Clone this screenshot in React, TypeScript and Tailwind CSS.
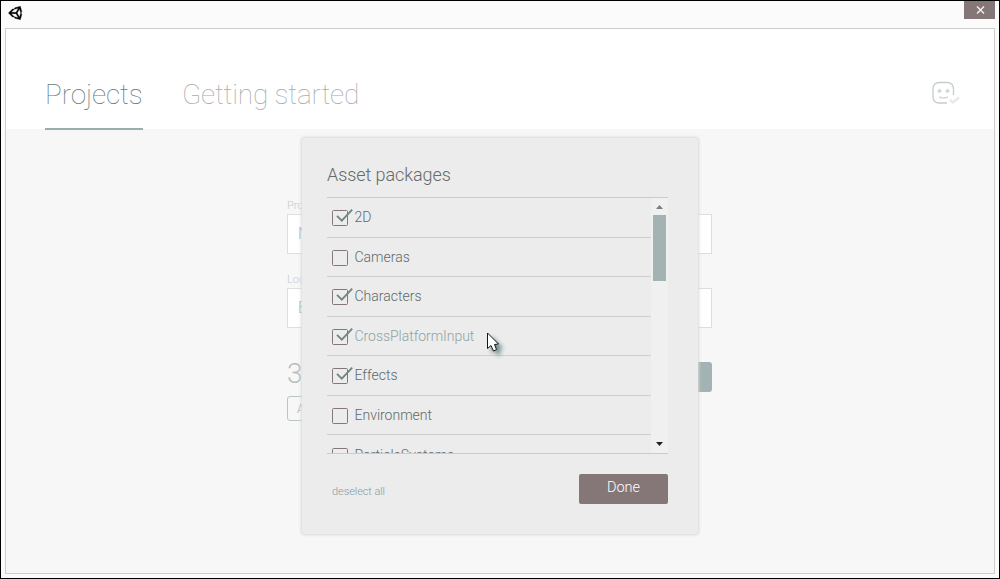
import React from "react";
import { FaUnity } from "react-icons/fa";

type Package = { name: string; checked: boolean; hovered?: boolean };

const packages: Package[] = [
  { name: "2D", checked: true },
  { name: "Cameras", checked: false },
  { name: "Characters", checked: true },
  { name: "CrossPlatformInput", checked: true, hovered: true },
  { name: "Effects", checked: true },
  { name: "Environment", checked: false },
  { name: "ParticleSystems", checked: false },
];

function Checkbox({ checked }: { checked: boolean }) {
  return (
    <svg width="22" height="20" viewBox="0 0 22 20" fill="none" className="shrink-0">
      <rect x="0.5" y="3.5" width="15" height="15" rx="1" stroke="#857777" />
      {checked && <path d="M5 8.8 L9.8 13.6 L20.2 2.6" stroke="#748484" strokeWidth="1.9" />}
    </svg>
  );
}

function PackageRow({ item }: { item: Package }) {
  return (
    <li className="flex h-[39.55px] shrink-0 items-center border-b border-[#cecece] pl-[5px]">
      <Checkbox checked={item.checked} />
      <span
        className={
          item.hovered
            ? "ml-[0.5px] text-[14px] leading-5 tracking-[-0.04px] text-[#8fa3a3]"
            : "ml-[0.5px] text-[14px] leading-5 text-[#606a6a]"
        }
      >
        {item.name}
      </span>
    </li>
  );
}

function Scrollbar() {
  return (
    <div className="flex w-[17px] shrink-0 flex-col items-center bg-[#f0f0f0]">
      <div className="flex h-[17px] items-center justify-center">
        <svg width="7" height="4" viewBox="0 0 7 4" className="mt-[1px]">
          <path d="M0 4 L3.5 0 L7 4Z" fill="#718080" />
        </svg>
      </div>
      <div className="h-[66px] w-[13px] bg-[#a3b2b2]" />
      <div className="flex-1" />
      <svg width="7" height="4" viewBox="0 0 7 4" className="mb-[7px]">
        <path d="M0 0 L3.5 4 L7 0Z" fill="#202020" />
      </svg>
    </div>
  );
}

function AssetDialog() {
  return (
    <section className="absolute top-[109px] left-[296px] flex h-[396px] w-[396px] flex-col rounded-[2px] bg-[#ececec] px-[25px] shadow-[0_0_3px_1px_#d8d8d8]">
      <h2 className="h-[59px] pt-[24px] text-[18px] leading-[26px] tracking-[-0.08px] text-[#666a6a]">
        Asset packages
      </h2>
      <div className="flex h-[257px] w-[341px] border-y border-[#c8cccc]">
        <ul className="flex min-w-0 flex-1 flex-col overflow-hidden">
          {packages.map((item) => (
            <PackageRow key={item.name} item={item} />
          ))}
        </ul>
        <Scrollbar />
      </div>
      <div className="mt-5 flex h-[30px] w-[341px] items-center justify-between pl-[5px]">
        <button className="pt-[5px] text-[11px] leading-4 tracking-[-0.08px] text-[#8a9b9b]">deselect all</button>
        <button className="h-[30px] w-[89px] rounded-[2px] bg-[#857777] pb-[3px] text-[14.5px] text-white">
          Done
        </button>
      </div>
    </section>
  );
}

function ProjectForm() {
  return (
    <form className="ml-[281px] flex w-[425px] flex-col pt-[69px] text-[#9daeae]">
      <label className="h-4 pt-px text-[11px] leading-[14px] text-[#c8c8c8]">Project name*</label>
      <div className="flex h-10 items-center border border-[#dedede] bg-white pl-[10px] text-[16px]">New</div>
      <label className="mt-[18px] h-4 pt-px text-[11px] leading-[14px] text-[#c8c8c8]">Location*</label>
      <div className="flex h-10 items-center justify-between border border-[#dedede] bg-white pl-[10px] text-[16px]">
        E:\
      </div>
      <div className="mt-[33px] flex h-[31px] items-center justify-between">
        <span className="mt-[-6px] text-[28px] leading-8 text-[#b5bfbf]">3D</span>
        <span className="h-[30px] w-[120px] rounded-[3px] bg-[#a3b2b2]" />
      </div>
      <div className="mt-1 flex h-[25px] w-[130px] items-center rounded-[3px] border border-[#bbc5c5] pl-[9px] text-[12px]">
        Asset
      </div>
    </form>
  );
}

function AccountIcon() {
  return (
    <svg width="28" height="24" viewBox="0 0 28 24" fill="none" className="mt-[52px] mr-[34px]">
      <path
        d="M21.5 14V8Q21.5 1.5 15 1.5H7.500Q1 1.500 1 8V15.500Q1 22 7.500 22H15"
        stroke="#c6cccc"
        strokeWidth="1.3"
      />
      <path d="M7.500 7.800V12M5.400 9.900H9.600M15.500 7.800V12M13.400 9.900H17.600" stroke="#cdd2d2" strokeWidth="1.5" />
      <path d="M7 15.800Q11.500 18 16 15.800" stroke="#d2d6d6" strokeWidth="1.3" />
      <path d="M18 18.800L20.800 21.500L27 16.500" stroke="#e6e8e8" strokeWidth="2.4" />
    </svg>
  );
}

function Cursor() {
  return (
    <svg
      width="24"
      height="28"
      viewBox="0 0 24 28"
      className="absolute top-[303px] left-[480px] drop-shadow-[4px_4px_2px_#6f8b8b]"
    >
      <path
        d="M1.500 1V16.500L5 13.500L7.500 19L10.500 17.500L8.500 12.500L12.500 12Z"
        fill="#fff"
        stroke="#151515"
        strokeWidth="1"
      />
    </svg>
  );
}

export default function App() {
  return (
    <div className="flex h-[579px] w-[1000px] flex-col overflow-hidden border border-black bg-[#fbfbfb] font-['Roboto','Liberation_Sans',sans-serif] font-light">
      <header className="flex h-[27px] shrink-0 items-start justify-between pl-[7px]">
        <FaUnity size={16} className="mt-[4px] stroke-black stroke-[12px] text-black" />
        <button className="mr-1 flex h-[18px] w-[31px] items-center justify-center bg-[#857777]" aria-label="Close">
          <svg width="9" height="8" viewBox="0 0 9 8" fill="none" className="ml-px">
            <path d="M1 .5L8 7.500M8 .5L1 7.500" stroke="#f4f4f4" strokeWidth="1.4" />
          </svg>
        </button>
      </header>
      <main className="relative mx-1 flex h-[546px] shrink-0 flex-col border border-[#cdcdcd] bg-[#f7f7f7]">
        <div className="flex h-[100px] shrink-0 items-start justify-between bg-white">
          <nav className="flex gap-[39px] pl-[39px] text-[28px] leading-8">
            <a className="h-[101px] w-[98px] border-b-2 border-[#9cadad] pt-[50px] font-thin tracking-[-0.1px] whitespace-nowrap text-[#657979]">
              Projects
            </a>
            <a className="pt-[50px] font-thin tracking-[-0.2px] whitespace-nowrap text-[#a6acac]">
              Getting started
            </a>
          </nav>
          <AccountIcon />
        </div>
        <ProjectForm />
        <AssetDialog />
        <Cursor />
      </main>
    </div>
  );
}
